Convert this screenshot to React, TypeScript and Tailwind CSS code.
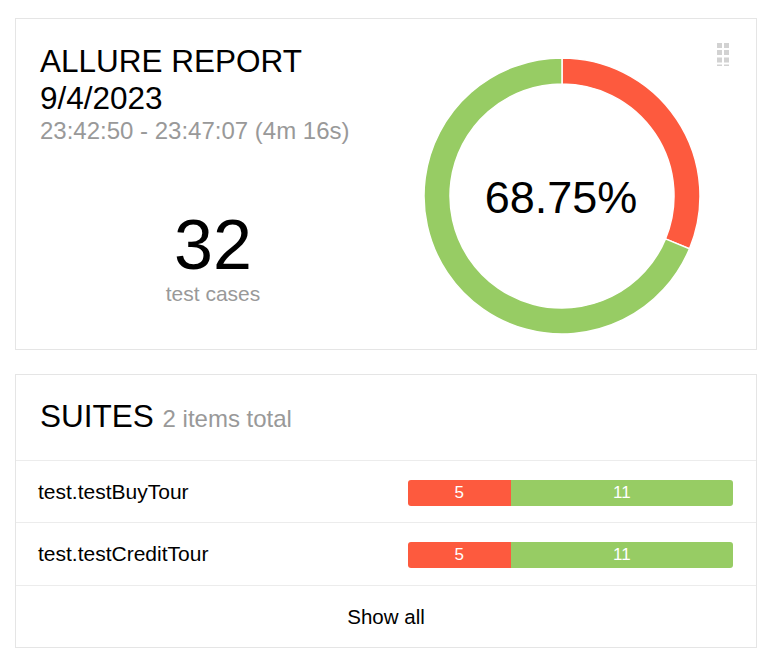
import React from 'react';

const suites = [
  { name: 'test.testBuyTour', failed: 5, passed: 11 },
  { name: 'test.testCreditTour', failed: 5, passed: 11 },
];

const DragHandle = () => (
  <svg width="12" height="24" viewBox="0 0 12 24" className="absolute top-[24px] right-[27px]">
    <g fill="#d2d2d2">
      <rect x="0" y="0" width="5" height="5" />
      <rect x="7" y="0" width="5" height="5" />
      <rect x="0" y="7" width="5" height="5" />
      <rect x="7" y="7" width="5" height="5" />
      <rect x="0" y="14.5" width="5" height="5" />
      <rect x="7" y="14.5" width="5" height="5" />
      <rect x="0" y="21.5" width="5" height="1.5" />
      <rect x="7" y="21.5" width="5" height="1.5" />
    </g>
  </svg>
);

const Donut = () => (
  <svg width="278" height="278" viewBox="0 0 278 278">
    <path
      d="M 139 1 A 138 138 0 0 1 266.495 191.81 L 242.475 181.86 A 112 112 0 0 0 139 27 Z"
      fill="#fd5a3e"
      stroke="#fff"
      strokeWidth="1.5"
    />
    <path
      d="M 266.495 191.81 A 138 138 0 1 1 139 1 L 139 27 A 112 112 0 1 0 242.475 181.86 Z"
      fill="#97cc64"
      stroke="#fff"
      strokeWidth="1.5"
    />
    <text
      x="138"
      y="156"
      textAnchor="middle"
      fontSize="45"
      fill="#000"
      fontFamily="'Liberation Sans', Arial, sans-serif"
    >
      68.75%
    </text>
  </svg>
);

const App = () => {
  return (
    <div className="min-h-screen bg-white pl-[15px] pr-[14px] pt-[18px] font-['Liberation_Sans',Arial,sans-serif] text-black">
      {/* Summary widget */}
      <div className="relative grid grid-cols-2 border border-[#e5e5e5] px-6 pt-6 pb-[14px]">
        <DragHandle />
        <div className="flex flex-col">
          <h2 className="text-[31.5px] leading-[37px]">
            ALLURE REPORT
            <br />
            9/4/2023
          </h2>
          <div className="text-[24px] leading-[28px] text-[#999]">23:42:50 - 23:47:07 (4m 16s)</div>
          <div className="mt-[63px] flex flex-col items-center">
            <div className="text-[70px] leading-[74px]">32</div>
            <div className="text-[21px] leading-[24px] text-[#999]">test cases</div>
          </div>
        </div>
        <div className="flex justify-center pl-[6px] pt-[14px]">
          <Donut />
        </div>
      </div>

      {/* Suites widget */}
      <div className="mt-6 border border-[#e5e5e5]">
        <div className="border-b border-[#ececec] px-6 pt-[23px] pb-[23px]">
          <h2 className="text-[31.5px] leading-[36px]">
            SUITES <span className="text-[24px] text-[#999]">2 items total</span>
          </h2>
        </div>
        {suites.map((s, i) => (
          <div
            key={s.name}
            className={`flex items-center justify-between border-b border-[#ececec] pl-[22px] pr-[23px] ${
              i === 0 ? 'h-[62px]' : 'h-[63px]'
            }`}
          >
            <div className="text-[21px] leading-[24px]">{s.name}</div>
            <div className="mt-[2px] flex h-[26px] w-[325px] overflow-hidden rounded-[3px] text-[17px] text-white">
              <div className="flex items-center justify-center bg-[#fd5a3e]" style={{ flexGrow: s.failed }}>
                {s.failed}
              </div>
              <div className="flex items-center justify-center bg-[#97cc64]" style={{ flexGrow: s.passed }}>
                {s.passed}
              </div>
            </div>
          </div>
        ))}
        <div className="flex h-[61px] items-center justify-center text-[20.5px] leading-[24px]">Show all</div>
      </div>
    </div>
  );
};

export default App;
